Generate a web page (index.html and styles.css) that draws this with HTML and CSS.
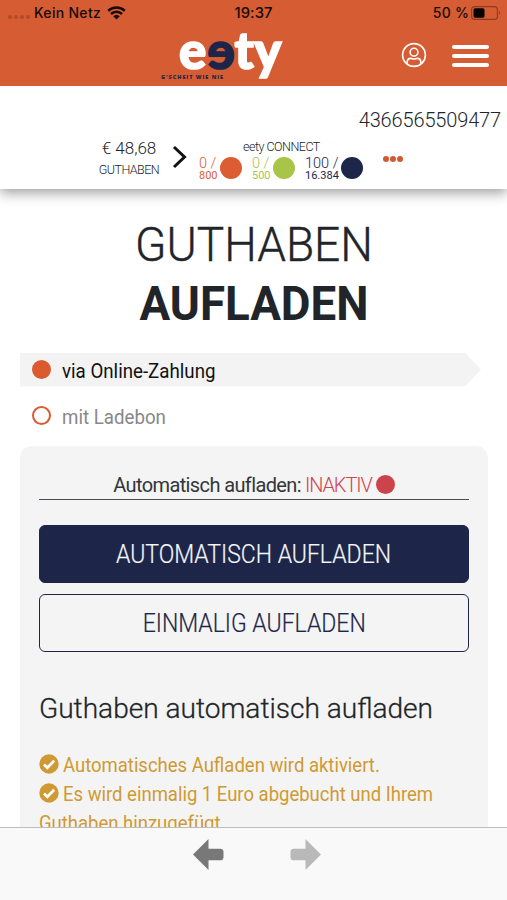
FILE: index.html
```
<!DOCTYPE html>
<html lang="de">
<head>
<meta charset="utf-8">
<title>eety – Guthaben aufladen</title>
<link rel="stylesheet" href="styles.css">
</head>
<body>
<div class="screen">
  <header class="top">
    <div class="status">
      <div class="carrier">
        <span class="signal"><i></i><i></i><i></i><i></i></span>
        <span class="carrier-name">Kein Netz</span>
        <svg class="wifi" viewBox="0 0 19 14"><path d="M1.2 4.9a12 12 0 0 1 16.6 0M4 8a8 8 0 0 1 11 0" fill="none" stroke="#160b07" stroke-width="2.5"/><path d="M6.2 10.2a4.8 4.8 0 0 1 6.6 0L9.5 13.6z" fill="#160b07"/></svg>
      </div>
      <div class="clock">19:37</div>
      <div class="power"><span class="percent">50 %</span>
        <svg class="battery" viewBox="0 0 30 14"><rect x=".6" y=".6" width="25.8" height="12.8" rx="3" fill="none" stroke="#8c3d22" stroke-width="1.1"/><rect x="2.5" y="2.3" width="11" height="9.4" rx="1.6" fill="#060302"/><path d="M28 4.8q2 2.2 0 4.4z" fill="#8c3d22"/></svg>
      </div>
    </div>
    <div class="brandbar">
      <div class="brand">
        <div class="logo"><span>e</span><span class="flip">e</span><span>t</span><span>y</span></div>
        <div class="slogan">G'SCHEIT WIE NIE</div>
      </div>
      <div class="actions">
        <svg class="user" viewBox="0 0 26 26" fill="none" stroke="#fff" stroke-width="1.6"><circle cx="13" cy="13" r="11.4"/><circle cx="13" cy="10.2" r="3.9"/><path d="M6.2 21.5v-1.3c0-2.5 1.5-3.8 3.6-3.8 1.2 0 1.8.6 3.2.6s2-.6 3.2-.6c2.1 0 3.6 1.3 3.6 3.8v1.3"/></svg>
        <div class="menu"><i></i><i></i><i></i></div>
      </div>
    </div>
  </header>

  <section class="account">
    <div class="number">4366565509477</div>
    <div class="summary">
      <div class="balance"><div class="amount">€ 48,68</div><div class="label">GUTHABEN</div></div>
      <svg class="chevron" viewBox="0 0 16 24"><path d="M2 2l10.5 10L2 22" fill="none" stroke="#111" stroke-width="3"/></svg>
      <div class="plan">
        <div class="plan-name">eety CONNECT</div>
        <div class="quotas">
          <div class="quota orange"><div><b>0 /</b><small>800</small></div><i></i></div>
          <div class="quota green"><div><b>0 /</b><small>500</small></div><i></i></div>
          <div class="quota navy"><div><b>100 /</b><small>16.384</small></div><i></i></div>
        </div>
      </div>
      <div class="more"><i></i><i></i><i></i></div>
    </div>
  </section>

  <main class="content">
    <h1><span class="thin">GUTHABEN</span><span class="heavy">AUFLADEN</span></h1>
    <div class="option selected"><i></i><span>via Online-Zahlung</span></div>
    <div class="option"><i></i><span>mit Ladebon</span></div>
    <div class="card">
      <div class="state"><span class="state-label">Automatisch aufladen:</span><span class="inactive">INAKTIV</span><i></i></div>
      <div class="btn primary"><span>AUTOMATISCH AUFLADEN</span></div>
      <div class="btn outline"><span>EINMALIG AUFLADEN</span></div>
      <h2>Guthaben automatisch aufladen</h2>
      <div class="notes">
        <div class="note"><svg viewBox="0 0 20 20"><circle cx="10" cy="10" r="9.7" fill="#cf9a33"/><path d="M5 10.5l3.3 3.3 6.9-7" fill="none" stroke="#fff" stroke-width="2.7"/></svg><span>Automatisches Aufladen wird aktiviert.</span></div>
        <div class="note"><svg viewBox="0 0 20 20"><circle cx="10" cy="10" r="9.7" fill="#cf9a33"/><path d="M5 10.5l3.3 3.3 6.9-7" fill="none" stroke="#fff" stroke-width="2.7"/></svg><span>Es wird einmalig 1 Euro abgebucht und Ihrem</span></div>
        <div class="note"><span>Guthaben hinzugefügt.</span></div>
      </div>
    </div>
  </main>

  <nav class="toolbar">
    <svg viewBox="0 0 32 32"><path d="M0 16L16 0v10h12q3.5 0 3.5 3.5v5q0 3.5-3.5 3.5H16v10z" fill="#787878"/></svg>
    <svg viewBox="0 0 32 32"><path d="M32 16L16 0v10H4Q.5 10 .5 13.5v5Q.5 22 4 22h12v10z" fill="#b9b9b9"/></svg>
  </nav>
</div>
</body>
</html>
```

FILE: styles.css
```
* { box-sizing: border-box; }
body { margin: 0; background: #fff; color: #212529; font-family: Roboto, "Noto Sans", sans-serif; font-weight: 400; white-space: nowrap; }
i { display: block; flex: none; }
svg { display: block; flex: none; }
.screen { width: 507px; height: 900px; overflow: hidden; display: flex; flex-direction: column; }

.top { height: 86px; flex: none; background: #d65c33; position: relative; z-index: 1; }
.status { height: 26px; display: grid; grid-template-columns: 1fr 40px 1fr; font: 500 14px/26px Inter, sans-serif; color: #160b07; }
.carrier { display: flex; padding-left: 8px; }
.signal { display: flex; gap: 2px; width: 26px; padding-top: 15px; }
.signal i { width: 4px; height: 4px; border-radius: 50%; background: #b14c2a; }
.carrier-name { width: 73px; letter-spacing: .3px; }
.wifi { width: 19px; height: 14px; margin-top: 6px; }
.clock { text-align: center; font-size: 14.8px; letter-spacing: .1px; }
.power { display: flex; justify-content: flex-end; padding-right: 6px; gap: 2px; }
.percent { letter-spacing: .2px; }
.battery { width: 30px; height: 14px; margin-top: 6px; }
.brandbar { height: 60px; display: flex; justify-content: space-between; padding: 0 18px 0 161px; }
.logo { display: flex; height: 46px; margin-left: 18px; font: 900 51px/47px Lato, sans-serif; color: #fff; -webkit-text-stroke: 1.7px currentColor; letter-spacing: .4px; }
.flip { color: #1d2649; transform: scaleX(-1); }
.slogan { font: 800 5.5px/8px "Open Sans", sans-serif; color: #1d2649; letter-spacing: .95px; margin-top: 1px; }
.actions { display: flex; gap: 25px; padding-top: 16px; }
.user { width: 26px; height: 26px; }
.menu { width: 37px; display: flex; flex-direction: column; gap: 5px; padding-top: 3px; }
.menu i { height: 4px; border-radius: 2px; background: #fff; }

.account { height: 103px; flex: none; background: #fff; box-shadow: 0 4px 12px rgba(0,0,0,.38); position: relative; padding-top: 22px; font-weight: 300; }
.number { font-size: 20px; line-height: 24px; text-align: right; padding-right: 6px; letter-spacing: -.15px; }
.summary { display: flex; padding-left: 97px; height: 57px; }
.balance { width: 64px; text-align: center; padding-top: 6px; }
.amount { font-size: 17px; line-height: 20px; }
.label { font-size: 12.5px; line-height: 24px; letter-spacing: -.55px; }
.chevron { width: 16px; height: 24px; margin: 13px 10px 0 11px; }
.plan { width: 168px; }
.plan-name { font-size: 12.5px; line-height: 18px; padding: 6px 0 0 45px; letter-spacing: -.5px; }
.quotas { display: flex; height: 25px; }
.quota { display: flex; justify-content: space-between; width: 43px; margin: 0 9px 0 1px; }
.quota.navy { width: 58px; margin-right: 0; }
.quota b, .quota small { display: block; font-weight: 300; }
.quota b { font-size: 14.5px; line-height: 15px; }
.quota small { font-size: 11px; line-height: 10px; font-weight: 400; }
.quota i { width: 22px; height: 22px; border-radius: 50%; background: currentColor; margin-top: 1px; }
.orange { color: #dc5d33; }
.green { color: #a8c548; }
.navy { color: #1d2649; }
.more { display: flex; gap: 1px; padding: 24px 0 0 17px; }
.more i { width: 6px; height: 6px; border-radius: 50%; background: #d35a30; }

.content { flex: 1; min-height: 0; overflow: hidden; padding: 25px 19px 0 20px; }
h1 { margin: 0; height: 138.5px; text-align: center; line-height: 59px; font-size: 48px; padding-top: 1px; }
h1 span { display: block; }
.thin { font-weight: 300; transform: scaleX(.958); -webkit-text-stroke: .4px currentColor; }
.heavy { font-weight: 700; transform: scaleX(.952); }
.option { height: 34px; margin-bottom: 12px; width: 461px; display: flex; align-items: center; gap: 11px; padding-left: 12px; font-size: 20px; color: #888; }
.option span { transform: scaleX(.935); transform-origin: left; padding-top: 2px; }
.option.selected { background: #f3f3f3; color: #111; clip-path: polygon(0 0, 445px 0, 100% 50%, 445px 100%, 0 100%); }
.option i { width: 19px; height: 19px; border-radius: 50%; border: 2px solid #db5a30; }
.selected i { background: #db5a30; }
.card { height: 420px; border-radius: 12px; background: #f4f4f4; padding: 27px 19px 0; margin-top: 13px; }
.state { height: 27px; border-bottom: 1.5px solid #4a4c58; display: flex; justify-content: center; font-size: 20px; line-height: 25px; gap: 4px; color: #333639; }
.state-label { letter-spacing: -.62px; }
.inactive { color: #d2434d; letter-spacing: -1.1px; font-weight: 300; }
.state i { width: 19px; height: 19px; border-radius: 50%; background: #cb444b; margin-top: 2px; }
.btn { height: 58px; border: 1.5px solid #1d2649; border-radius: 6px; display: flex; justify-content: center; align-items: center; font-size: 25px; color: #1d2649; font-weight: 300; }
.btn span { transform: scaleX(.92); padding-top: 1px; -webkit-text-stroke: .2px currentColor; }
.primary { background: #1d2649; color: #f4f6fa; margin: 25px 0 11px; }
h2 { margin: 38px 0 22px; font-size: 28.5px; line-height: 38px; font-weight: 300; transform: scaleX(.985); transform-origin: left; -webkit-text-stroke: .3px currentColor; }
.note { display: flex; gap: 4px; font-size: 19.5px; line-height: 29.3px; color: #cf9a33; }
.note span { transform: scaleX(.948); transform-origin: left; padding-top: 1px; margin-bottom: -1px; }
.note svg { width: 20px; height: 20px; margin-top: 4px; }

.toolbar { height: 73px; flex: none; background: #f9f9f9; border-top: 1px solid #bdbdbd; display: flex; justify-content: center; gap: 66px; padding: 11px 0 0 7px; }
.toolbar svg { width: 31px; height: 31px; }
```
